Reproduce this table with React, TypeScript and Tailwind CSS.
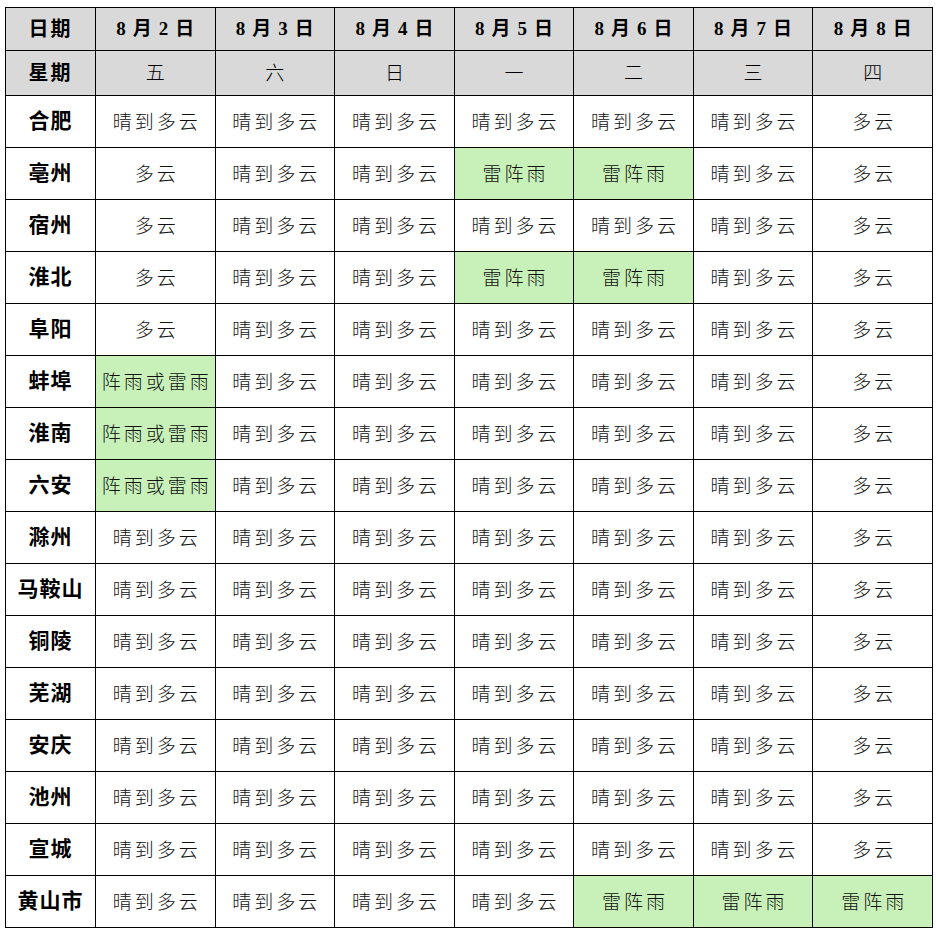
import React from "react";

const dates = ["8月2日", "8月3日", "8月4日", "8月5日", "8月6日", "8月7日", "8月8日"];
const weekdays = ["五", "六", "日", "一", "二", "三", "四"];

const A = "晴到多云";
const B = "多云";
const T = "雷阵雨";
const S = "阵雨或雷雨";

const rows: [string, string[]][] = [
  ["合肥", [A, A, A, A, A, A, B]],
  ["亳州", [B, A, A, T, T, A, B]],
  ["宿州", [B, A, A, A, A, A, B]],
  ["淮北", [B, A, A, T, T, A, B]],
  ["阜阳", [B, A, A, A, A, A, B]],
  ["蚌埠", [S, A, A, A, A, A, B]],
  ["淮南", [S, A, A, A, A, A, B]],
  ["六安", [S, A, A, A, A, A, B]],
  ["滁州", [A, A, A, A, A, A, B]],
  ["马鞍山", [A, A, A, A, A, A, B]],
  ["铜陵", [A, A, A, A, A, A, B]],
  ["芜湖", [A, A, A, A, A, A, B]],
  ["安庆", [A, A, A, A, A, A, B]],
  ["池州", [A, A, A, A, A, A, B]],
  ["宣城", [A, A, A, A, A, A, B]],
  ["黄山市", [A, A, A, A, T, T, T]],
];

const font = { fontFamily: '"Liberation Serif", "Noto Sans CJK SC", serif' };

export default function App() {
  return (
    <div className="bg-white w-[936px] h-[930px] pt-[7px] pl-[5px]" style={font}>
      <table className="table-fixed border-collapse w-[928px]">
        <colgroup>
          <col className="w-[90px]" />
          {dates.map((d) => (
            <col key={d} />
          ))}
        </colgroup>
        <tbody>
          <tr className="h-[43px] bg-[#d9d9d9]">
            <td className="border border-black text-center font-bold text-[20px] tracking-[2px] text-black">日期</td>
            {dates.map((d) => (
              <td key={d} className="border border-black text-center font-bold text-[19px] tracking-[7px] pl-[7px] text-black">
                {d}
              </td>
            ))}
          </tr>
          <tr className="h-[45px] bg-[#d9d9d9]">
            <td className="border border-black text-center font-bold text-[20px] tracking-[2px] text-black">星期</td>
            {weekdays.map((w) => (
              <td key={w} className="border border-black text-center font-light text-[19px] pt-[2px] text-black">
                {w}
              </td>
            ))}
          </tr>
          {rows.map(([city, cells]) => (
            <tr key={city} className="h-[52px]">
              <td className="border border-black text-center font-bold text-[21px] tracking-[1px] pt-[1px] text-black">{city}</td>
              {cells.map((c, i) => (
                <td
                  key={i}
                  className={
                    "border border-black text-center font-light text-[19px] tracking-[3px] pl-[3px] pt-[3px] text-[#111] " +
                    (c === T || c === S ? "bg-[#c8f1b9]" : "bg-white")
                  }
                >
                  {c}
                </td>
              ))}
            </tr>
          ))}
        </tbody>
      </table>
    </div>
  );
}
